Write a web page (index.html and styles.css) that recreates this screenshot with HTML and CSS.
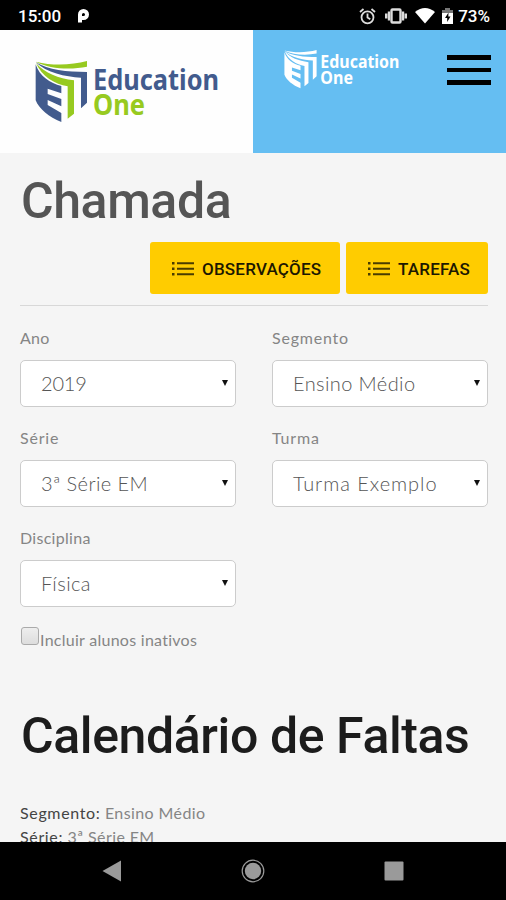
FILE: index.html
```
<!DOCTYPE html>
<html lang="pt-br">
<head>
    <meta charset="UTF-8">
    <meta name="viewport" content="width=device-width, initial-scale=1.0">
    <title>Chamada</title>
    <link rel="stylesheet" href="styles.css">
</head>
<body>
    <!-- logo and list icon, reused below -->
    <svg class="defs">
        <symbol id="logo" viewBox="0 0 185 62" overflow="visible">
            <g transform="scale(.3333)">
                <path class="green" d="M2 2C55 15 110 12 156 0V17C105 27 45 24 2 2Z"/>
                <path class="navy" d="M2 4C40 27 95 33 156 33V125L138 142V50C90 48 35 35 2 4Z"/>
                <path class="green" d="M3 6C30 37 70 52 117 58V158L98 173V76C60 70 20 46 3 6Z"/>
                <path class="navy" d="M2 10C14 47 45 66 79 75V97L38 83V99L79 114V136L38 117V132L79 156V183C42 168 12 144 2 118Z"/>
            </g>
            <text class="navy" x="58" y="29" textLength="126" lengthAdjust="spacingAndGlyphs">Education</text>
            <text class="green" x="58" y="54" textLength="52" lengthAdjust="spacingAndGlyphs">One</text>
        </symbol>
        <symbol id="list" viewBox="0 0 22 14">
            <path d="M0 0h2.5v2.5H0zM0 5.5h2.5V8H0zM0 11h2.5v2.5H0zM5 .3h17v2H5zM5 5.8h17v2H5zM5 11.3h17v2H5z"/>
        </symbol>
    </svg>

    <div class="status">
        <span class="time">15:00</span>
        <svg class="parking" width="13" height="16" viewBox="0 0 13 16"><path d="M3 14.5V6.5A3.5 3.5 0 1 1 6.5 10H5" fill="none" stroke="#fff" stroke-width="4"/></svg>
        <div class="status-right">
            <svg class="alarm" width="17" height="17" viewBox="0 0 17 17" fill="none" stroke="#ddd" stroke-width="1.8"><circle cx="8.5" cy="9.3" r="6"/><path d="M8.5 5.5v4l2.8 1.7M1 4l3.5-3M16 4l-3.5-3"/></svg>
            <svg class="vibrate" width="22" height="16" viewBox="0 0 22 16" fill="none" stroke="#ddd" stroke-width="2.4"><rect x="6.5" y="1.5" width="9" height="13" rx="1"/><path d="M4 3.5v9M1.2 5.5v5M18 3.5v9M20.8 5.5v5"/></svg>
            <svg class="wifi" width="20" height="16" viewBox="0 0 20 16"><path d="M0 4Q10-4 20 4L10 15.5Z" fill="#fff"/></svg>
            <svg class="battery" width="11" height="16" viewBox="0 0 11 16"><path d="M3 0h5v2h3v4H0V2h3z" fill="#777"/><path d="M0 5h11v11H0z" fill="#fff"/><path d="M6.5 4.5L3 10h2.2v4L8.5 8.5H6.3z" fill="#000"/></svg>
            <span>73%</span>
        </div>
    </div>

    <div class="header">
        <div class="brand"><svg class="logo"><use href="#logo"/></svg></div>
        <div class="navbar">
            <svg class="logo-white"><use href="#logo"/></svg>
            <div class="menu"><i></i><i></i><i></i></div>
        </div>
    </div>

    <div class="content">
        <h1>Chamada</h1>
        <div class="actions">
            <a class="btn btn-obs"><svg><use href="#list"/></svg><span>OBSERVAÇÕES</span></a>
            <a class="btn btn-tar"><svg><use href="#list"/></svg><span>TAREFAS</span></a>
        </div>
        <div class="filters">
            <div class="field"><label>Ano</label><div class="select year"><span>2019</span></div></div>
            <div class="field"><label class="wide">Segmento</label><div class="select"><span>Ensino Médio</span></div></div>
            <div class="field"><label class="wide">Série</label><div class="select"><span>3ª Série EM</span></div></div>
            <div class="field"><label class="wide">Turma</label><div class="select wide"><span>Turma Exemplo</span></div></div>
            <div class="field"><label>Disciplina</label><div class="select"><span>Física</span></div></div>
        </div>
        <div class="check"><i></i><span>Incluir alunos inativos</span></div>
        <h2>Calendário de Faltas</h2>
        <div class="info">
            <p><b>Segmento:</b> Ensino Médio</p>
            <p><b>Série:</b> 3ª Série EM</p>
        </div>
    </div>

    <div class="nav">
        <svg width="20" height="22" viewBox="0 0 20 22"><path d="M.5 11L19 .5v21z"/></svg>
        <svg width="24" height="24" viewBox="0 0 24 24"><circle cx="12" cy="12" r="8.2"/><circle class="ring" cx="12" cy="12" r="10.8"/></svg>
        <svg width="20" height="20" viewBox="0 0 20 20"><rect x=".5" y=".5" width="19" height="19" rx="1"/></svg>
    </div>
</body>
</html>
```
FILE: styles.css
```
*{
    margin: 0;
    padding: 0;
    box-sizing: border-box;
}
body{
    height: 900px;
    display: flex;
    flex-direction: column;
    overflow: hidden;
    background: #f5f5f5;
    font-family: Lato, "Open Sans", sans-serif;
    color: #858585;
}
svg{
    display: block;
    flex: none;
    overflow: visible;
}
.defs{
    position: absolute;
    width: 0;
    height: 0;
}
.status{
    height: 30px;
    flex: none;
    display: flex;
    align-items: center;
    padding: 2px 16px 0 18px;
    background: #000;
    color: #fff;
    font: 500 17px/28px Roboto, sans-serif;
}
.time{
    width: 59px;
}
.status-right{
    margin-left: auto;
    display: flex;
    align-items: center;
}
.vibrate{
    margin-left: 9px;
}
.wifi{
    margin-left: 8px;
}
.battery{
    margin: 0 5px 0 7px;
}
.header{
    height: 123px;
    flex: none;
    display: flex;
    --navy: #425b8d;
    --green: #97ca20;
}
.brand{
    width: 253px;
    padding: 31px 0 0 35px;
    background: #fefefe;
}
.logo{
    width: 185px;
    height: 62px;
}
.navy{
    fill: var(--navy);
}
.green{
    fill: var(--green);
}
text{
    font: 700 29px "Noto Sans", sans-serif;
}
.navbar{
    flex: 1;
    display: flex;
    justify-content: space-between;
    padding: 20px 15px 0 31px;
    background: #65bef2;
    --navy: #fff;
    --green: #fff;
}
.logo-white{
    width: 116px;
    height: 39px;
}
.menu{
    width: 44px;
    display: flex;
    flex-direction: column;
    gap: 8px;
    padding-top: 5px;
}
.menu i{
    height: 4.5px;
    background: #000;
}
.content{
    flex: 1;
    min-height: 0;
    overflow: hidden;
    padding: 0 18px 0 20px;
}
h1, h2{
    padding-left: 1px;
    font: 500 50px/60px Roboto, sans-serif;
    letter-spacing: -.4px;
    white-space: nowrap;
}
h1{
    margin-top: 18px;
    color: #555;
}
.actions{
    display: flex;
    justify-content: flex-end;
    gap: 6px;
    margin-top: 11px;
    padding-bottom: 11px;
    border-bottom: 1px solid #d8d8d8;
}
.btn{
    height: 52px;
    display: flex;
    align-items: center;
    padding: 2px 0 0 22px;
    border-radius: 3px;
    background: #fc0;
    color: #1c1800;
    font: 500 17px Roboto, sans-serif;
    letter-spacing: .2px;
}
.btn svg{
    width: 22px;
    height: 14px;
    margin-right: 8px;
    fill: #4a3c00;
}
.btn-obs{
    width: 190px;
}
.btn-tar{
    width: 142px;
}
.filters{
    display: grid;
    grid-template-columns: 216px 216px;
    column-gap: 36px;
    margin-top: 20px;
}
.field{
    height: 100px;
}
label{
    display: block;
    height: 34px;
    font-size: 16px;
    line-height: 24px;
    letter-spacing: .3px;
}
label.wide{
    letter-spacing: .8px;
}
.select{
    height: 47px;
    display: flex;
    justify-content: space-between;
    align-items: center;
    padding: 0 7px 2px 20px;
    border: 1px solid #ccc;
    border-radius: 5px;
    background: #fff;
    color: #555;
    font-size: 20px;
    font-weight: 300;
    letter-spacing: .4px;
}
.select.year{
    letter-spacing: -.2px;
}
.select.wide{
    letter-spacing: .95px;
}
.select::after{
    content: "";
    border: 3.5px solid transparent;
    border-top: 6px solid #111;
    border-bottom: 0;
}
.check{
    height: 25px;
    display: flex;
    font-size: 16px;
    line-height: 27px;
    letter-spacing: .27px;
}
.check i{
    width: 18px;
    height: 18px;
    margin: 1px 1px 0;
    border: 1px solid #aaa;
    border-radius: 3px;
    background: linear-gradient(#eee, #ddd);
}
h2{
    margin-top: 55px;
    color: #1c1c1c;
}
.info{
    margin-top: 35px;
    font-size: 16px;
    line-height: 24px;
    letter-spacing: .4px;
}
.info b{
    font-weight: 400;
    letter-spacing: .65px;
    color: #444;
}
.nav{
    height: 58px;
    flex: none;
    display: flex;
    justify-content: space-between;
    align-items: center;
    padding: 0 102px;
    background: #000;
    fill: #9a9a9a;
}
.ring{
    fill: none;
    stroke: #9a9a9a;
    stroke-width: 1.2;
}
```
